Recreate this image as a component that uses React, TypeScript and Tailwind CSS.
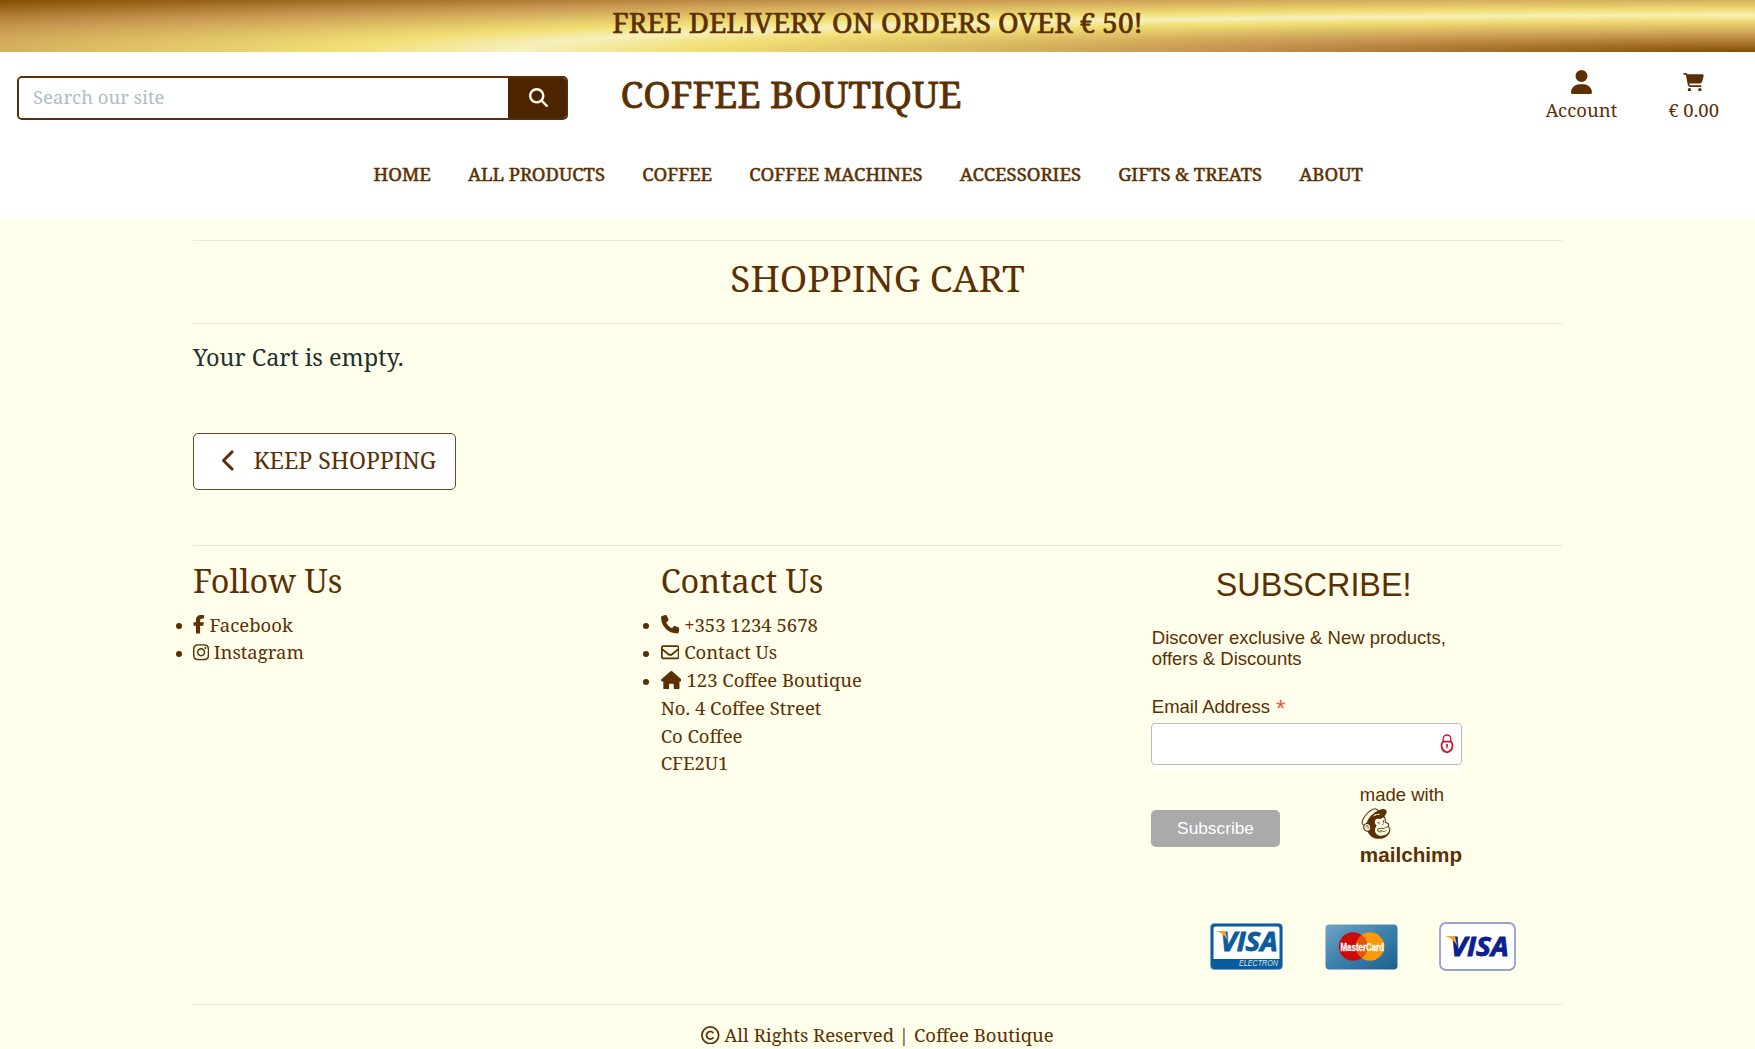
import type { ReactNode } from "react";
import {
  FaCartShopping,
  FaChevronLeft,
  FaFacebookF,
  FaHouse,
  FaInstagram,
  FaMagnifyingGlass,
  FaMailchimp,
  FaPhone,
  FaRegCopyright,
  FaRegEnvelope,
  FaUser,
} from "react-icons/fa6";

const navItems = ["HOME", "ALL PRODUCTS", "COFFEE", "COFFEE MACHINES", "ACCESSORIES", "GIFTS & TREATS", "ABOUT"];

function Rule({ className = "" }: { className?: string }) {
  return <div className={`h-px w-full shrink-0 bg-[#e9ebd8] ${className}`} />;
}

function Bullet({ children }: { children: ReactNode }) {
  return (
    <li className="relative flex h-[27.75px] items-center whitespace-nowrap leading-[27.75px]">
      <span className="absolute -left-[17.5px] top-[12.5px] size-[6px] rounded-full bg-[#5a2e02]" />
      {children}
    </li>
  );
}

function Header() {
  return (
    <header className="h-[218px] bg-white">
      <div className="h-[51.7px] bg-[radial-gradient(ellipse_farthest-corner_at_right_bottom,#824e00_0%,#c79650_22%,#f1df75_43%,#f6f0bd_50%,#f1df75_57%,#c79650_78%,#824e00_100%)] pt-[4.3px] text-center text-[27.8px] leading-[37px] [-webkit-text-stroke:0.7px_#5b3000]">
        FREE DELIVERY ON ORDERS OVER € 50!
      </div>
      <div className="flex h-[108.5px] items-start">
        <div className="ml-[17px] mt-6 flex h-[44px] w-[550.5px] overflow-hidden rounded-[5px] border-2 border-[#57300a]">
          <input
            className="min-w-0 grow bg-white px-3.5 pb-0.5 text-[18.5px] outline-none placeholder:text-[#aebcc3]"
            placeholder="Search our site"
          />
          <button className="flex w-[58px] items-center justify-center bg-[#4d2400] pl-[3px] text-[#fffff0]">
            <FaMagnifyingGlass className="size-[19px]" />
          </button>
        </div>
        <h1 className="ml-[53px] mt-[20.5px] text-[37px] leading-[44px] [-webkit-text-stroke:0.8px_#5b3000]">COFFEE BOUTIQUE</h1>
        <div className="ml-auto mr-9 flex gap-[51px] pt-[18px] text-[18.5px] leading-7">
          <div className="flex flex-col items-center">
            <FaUser className="h-[24px] w-[21px]" />
            <span className="mt-[2px]">Account</span>
          </div>
          <div className="flex flex-col items-center">
            <FaCartShopping className="mb-[2.5px] mt-[3px] h-[18.5px] w-[21px]" />
            <span className="mt-[2px]">€ 0.00</span>
          </div>
        </div>
      </div>
      <nav className="flex gap-[37.15px] pl-[373.5px] text-[18.5px] leading-7 [-webkit-text-stroke:0.5px_#5b3000]">
        {navItems.map((item) => (
          <a key={item}>{item}</a>
        ))}
      </nav>
    </header>
  );
}

function LockIcon() {
  return (
    <svg className="h-[20px] w-[14px]" viewBox="0 0 14 20" fill="none" stroke="#c5162f">
      <path d="M3.2 8V4.4a3.8 3.4 0 0 1 7.6 0V8" strokeWidth="1.3" />
      <path d="M3 7.6h8c1.2 1.2 1.6 2.4 1.5 4C12.3 15.5 10 17.6 7 18.3 4 17.6 1.7 15.5 1.5 11.6c-.1-1.6.3-2.8 1.5-4z" strokeWidth="1.8" />
      <path d="M7 10.3v4" strokeWidth="1.3" />
      <circle cx="7" cy="11.3" r="1.1" fill="#c5162f" stroke="none" />
    </svg>
  );
}

function VisaElectron() {
  return (
    <svg className="h-[47px] w-[73px] overflow-visible" viewBox="0 0 73 47">
      <rect x="0.5" y="0.5" width="72" height="46" rx="4" fill="#0a5c9c" stroke="#6fa3c8" strokeWidth="0.6" />
      <path d="M3.5 5.5a2 2 0 0 1 2-2h62a2 2 0 0 1 2 2V36h-66z" fill="#fff" />
      <text x="10.5" y="27.5" textLength="57" lengthAdjust="spacingAndGlyphs" fill="#0a5c9c" stroke="#0a5c9c" strokeWidth="0.9" className="font-['Open_Sans'] text-[26px] font-bold italic">
        VISA
      </text>
      <path d="M5.5 8h8.2c1.3 0 2 .6 2.3 1.9l1.6 8C15.5 13 11.5 9.5 5.5 8z" fill="#f0a32c" />
      <text x="29" y="43.3" textLength="39" lengthAdjust="spacingAndGlyphs" fill="#d6e6f2" className="font-['Liberation_Sans'] text-[8.5px] italic">
        ELECTRON
      </text>
    </svg>
  );
}

function MasterCard() {
  return (
    <svg className="h-[46px] w-[73px] overflow-visible" viewBox="0 0 73 46">
      <defs>
        <linearGradient id="mc" x1="0" y1="0" x2="1" y2="1">
          <stop offset="0" stopColor="#6fa5c4" />
          <stop offset="0.5" stopColor="#3c80ac" />
          <stop offset="1" stopColor="#1c608f" />
        </linearGradient>
      </defs>
      <rect x="0.5" y="0.5" width="72" height="45" rx="4" fill="url(#mc)" />
      <circle cx="45" cy="22.5" r="14.3" fill="#fb9a06" />
      <circle cx="28" cy="22.5" r="14.3" fill="#cc0a0a" />
      <path d="M36.5 11a14.3 14.3 0 0 1 0 23 14.3 14.3 0 0 1 0-23z" fill="#e2560c" />
      <text x="15.5" y="26.5" textLength="43.5" lengthAdjust="spacingAndGlyphs" fill="#fff" stroke="#fff" strokeWidth="0.3" className="font-['Liberation_Sans'] text-[10.5px] font-bold">
        MasterCard
      </text>
    </svg>
  );
}

function Visa() {
  return (
    <svg className="h-[49px] w-[77px] overflow-visible" viewBox="0 0 77 49">
      <rect x="1" y="1" width="75" height="47" rx="6" fill="#fff" stroke="#98a0d2" strokeWidth="1.8" />
      <text x="11.5" y="34" textLength="58" lengthAdjust="spacingAndGlyphs" fill="#0a2191" stroke="#0a2191" strokeWidth="0.9" className="font-['Open_Sans'] text-[27px] font-bold italic">
        VISA
      </text>
      <path d="M6 14h8.2c1.3 0 2 .6 2.3 1.9l1.7 8.2C16 19.3 12 15.5 6 14z" fill="#f0a32c" />
    </svg>
  );
}

function Subscribe() {
  return (
    <div className="w-[411px] font-['Liberation_Sans',sans-serif]">
      <h2 className="mt-[5px] pl-[64.5px] text-[32.3px] leading-10">SUBSCRIBE!</h2>
      <p className="mt-[22.5px] pl-[0.5px] text-[18.5px] leading-[21px]">
        Discover exclusive &amp; New products,
        <br />
        offers &amp; Discounts
      </p>
      <p className="mt-[26.5px] flex h-[21px] pl-[0.5px] text-[18.5px] leading-[21px]">
        Email Address <span className="ml-[6px] mt-[2px] text-[24px] leading-[21px] text-[#e85c41]">*</span>
      </p>
      <div className="mt-[6.5px] flex h-[42px] w-[310.5px] items-center justify-end rounded-[4px] border border-[#b8bcc0] bg-white pr-[6.5px]">
        <LockIcon />
      </div>
      <div className="h-[9px] w-[310.5px] bg-[#fffff5]" />
      <div className="mt-[9.5px] flex">
        <button className="mt-[26px] h-[37px] w-[128.5px] rounded-[5px] bg-[#aaaaaa] text-[17.3px] text-white">Subscribe</button>
        <div className="ml-20 flex flex-col">
          <span className="text-[18.5px] leading-[21px]">made with</span>
          <FaMailchimp className="mt-[1px] h-[35px] w-[32px]" />
          <span className="mt-[2px] text-[20.7px] font-bold leading-6">mailchimp</span>
        </div>
      </div>
      <div className="ml-[59px] mt-[55.5px] flex h-[49px] items-center">
        <VisaElectron />
        <div className="ml-[42px]"><MasterCard /></div>
        <div className="ml-[41px]"><Visa /></div>
      </div>
    </div>
  );
}

export default function App() {
  return (
    <div className="h-[1049px] w-[1755px] overflow-hidden bg-[#ffffeb] font-['Noto_Serif','DejaVu_Serif_Condensed',serif] text-[#5c3004]">
      <Header />
      <main className="ml-[193px] flex w-[1369px] flex-col">
        <Rule className="mt-[22px]" />
        <h2 className="mt-[15px] text-center text-[37px] leading-[44px]">SHOPPING CART</h2>
        <Rule className="mt-[23px]" />
        <p className="mt-[14.7px] text-[23.5px] leading-9 text-[#22302f]">Your Cart is empty.</p>
        <button className="mt-[58.3px] flex h-[57px] w-[263px] items-center rounded-[5px] border border-[#6b4a2c] bg-white pb-[2px] pl-[28px] text-[23px] leading-[34px]">
          <FaChevronLeft className="h-[23px] w-[14.5px]" />
          <span className="ml-[17px] whitespace-nowrap">KEEP SHOPPING</span>
        </button>
        <Rule className="mt-[55px]" />
        <div className="flex h-[458px] pt-[14px] text-[18.5px]">
          <section className="w-[468px]">
            <h2 className="mb-[10.7px] text-[32.4px] leading-10">Follow Us</h2>
            <ul>
              <Bullet>
                <FaFacebookF className="mr-[5px] h-[18.5px] w-[11.6px]" />
                Facebook
              </Bullet>
              <Bullet>
                <FaInstagram className="mr-[4.5px] h-[18.5px] w-[16.2px]" />
                Instagram
              </Bullet>
            </ul>
          </section>
          <section className="w-[491px]">
            <h2 className="mb-[10.7px] text-[32.4px] leading-10">Contact Us</h2>
            <ul>
              <Bullet>
                <FaPhone className="mr-[5px] size-[18.5px]" />
                +353 1234 5678
              </Bullet>
              <Bullet>
                <FaRegEnvelope className="mr-[5px] size-[18.5px]" />
                Contact Us
              </Bullet>
              <Bullet>
                <FaHouse className="mr-[5px] h-[18.5px] w-[20.8px]" />
                123 Coffee Boutique
              </Bullet>
              <li className="list-none leading-[27.75px]">
                No. 4 Coffee Street
                <br />
                Co Coffee
                <br />
                CFE2U1
              </li>
            </ul>
          </section>
          <Subscribe />
        </div>
        <Rule />
        <footer className="mt-[16px] flex items-center justify-center text-[18.5px] leading-7">
          <FaRegCopyright className="mr-[4.5px] size-[18.5px]" />
          All Rights Reserved | Coffee Boutique
        </footer>
      </main>
    </div>
  );
}
